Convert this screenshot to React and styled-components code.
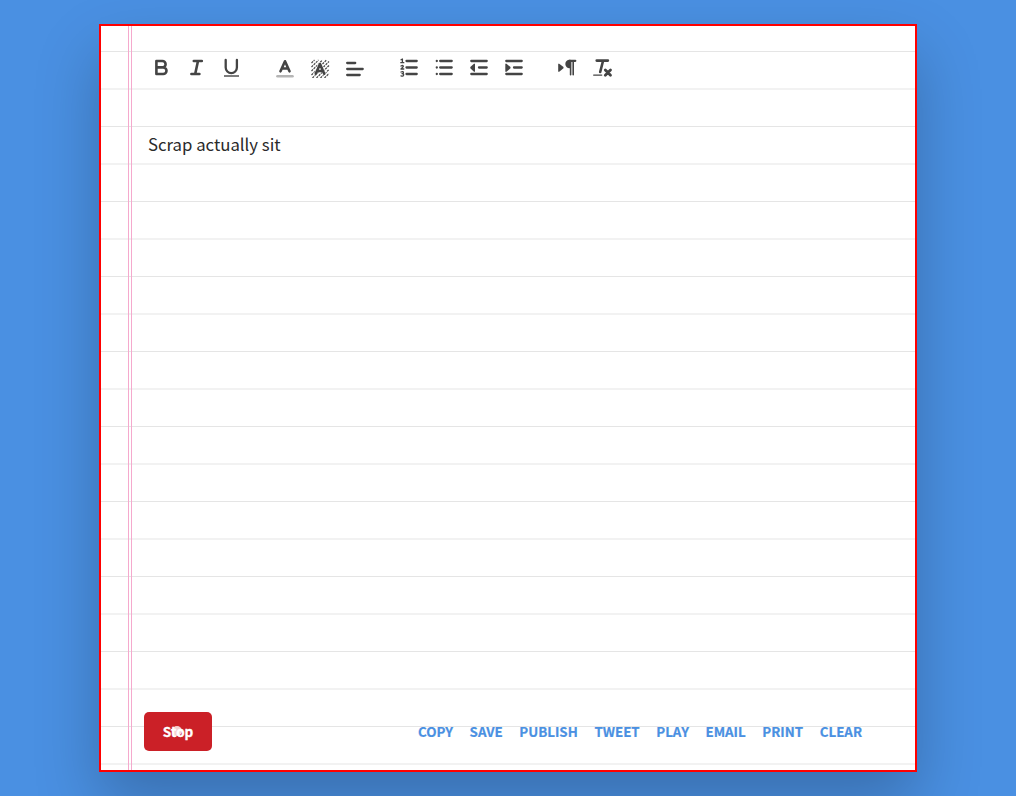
import React from "react";
import styled, { createGlobalStyle } from "styled-components";

const GlobalStyle = createGlobalStyle`
  *, *::before, *::after { box-sizing: border-box; }
  html, body { margin: 0; height: 100%; overflow: hidden; }
  body {
    background: #4a90e2;
    color: #2a2a2a;
    font-family: "Source Sans Pro", "Noto Sans CJK JP", sans-serif;
  }
`;

const Page = styled.main`
  height: 796px;
  padding: 24px 99px;
  background: #4a90e2;
`;

const Paper = styled.section`
  display: flex;
  width: 818px;
  height: 748px;
  border: 2px solid #ff0000;
  background-color: #fff;
  background-image: linear-gradient(
    to bottom,
    transparent 25px, #e5e5e5 25px, #e5e5e5 26px,
    transparent 26px, transparent 62px,
    #f2f2f2 62px, #f2f2f2 64px, transparent 64px
  );
  background-size: 100% 75px;
  background-origin: padding-box;
  box-shadow: 0 30px 60px rgba(0, 0, 0, 0.23);
`;

const Margin = styled.div`
  flex: none;
  width: 31px;
  border-right: 4px double #f5a9cd;
`;

const Content = styled.div`
  flex: 1;
  display: flex;
  flex-direction: column;
  padding: 24px 53px 19px 12px;
`;

const Toolbar = styled.div`
  display: flex;
  gap: 19px;
  height: 36px;
  margin-left: -0.5px;
`;

const Group = styled.div`
  display: flex;
`;

const ToolButton = styled.button`
  display: grid;
  place-items: center;
  width: 35px;
  height: 36px;
  padding: 0;
  border: 0;
  background: none;
  color: #444;
`;

const Icon = styled.svg`
  display: block;
  width: 20px;
  height: 20px;
  fill: none;
  stroke: currentColor;
  stroke-width: ${(p) => (p.$heavy ? 2.6 : 2.3)};
  stroke-linecap: round;
  stroke-linejoin: round;
`;

const Editor = styled.div`
  flex: 1;
  padding: 40px 4px;
  font-size: 16.75px;
  line-height: 37px;
`;

const Footer = styled.footer`
  display: flex;
  align-items: center;
  justify-content: space-between;
  height: 39px;
`;

const StopButton = styled.button`
  display: grid;
  place-items: center;
  width: 68px;
  height: 39px;
  padding: 0 0 2px;
  border: 0;
  border-radius: 5px;
  background: #cb2027;
  color: #fff;
  font: 700 13.5px "Noto Sans CJK JP", sans-serif;
  -webkit-text-stroke: 0.3px currentColor;
  > * { grid-area: 1 / 1; }
`;

const Pulse = styled.span`
  width: 10px;
  height: 10px;
  margin: 1px 2px 0 0;
  border-radius: 50%;
  background: rgba(255, 255, 255, 0.8);
`;

const Links = styled.nav`
  display: flex;
  gap: 16.6px;
`;

const Link = styled.a`
  color: #4a90e2;
  font-size: 13.35px;
  font-weight: 700;
  line-height: 20px;
  -webkit-text-stroke: 0.2px currentColor;
`;

const solid = { fill: "currentColor", stroke: "none" };

const groups = [
  [
    ["Bold", <path d="M5.4 3v13h6.8a3.3 3.3 0 0 0 0-6.6H5.4h6a3.2 3.2 0 0 0 0-6.4z" />, true],
    ["Italic", <path d="M7.8 3h8M5.4 16h8M12 3L9.2 16" />, true],
    ["Underline", <><path d="M4.7 2v7.500a5.600 5.600 0 0 0 11.200 0V2" /><path d="M3 18h15" strokeWidth="1.4" strokeLinecap="butt" /></>],
  ],
  [
    ["Text color", <><path d="M5.500 13.300L10 3.300l4.500 10M7 10.500h6" /><path d="M2.500 18.200h15" stroke="#b5b5b5" strokeWidth="2.600" /></>, true],
    ["Highlight", <><path strokeWidth="1.2" strokeDasharray="2.200 0.900" strokeLinecap="butt" d="M1.500 5L4.500 2M1.500 9L8.500 2M1.500 13L12.500 2M1.500 17L16.500 2M2.500 20L19 3.500M6.500 20L19 7.500M10.500 20l8.500-8.500M14.500 20l4.500-4.500" /><path stroke="#fff" strokeOpacity="0.6" strokeWidth="4" d="M5.800 15.700L10 6l4.200 9.700" /><path d="M5.800 15.700L10 6l4.200 9.700M7 13h6" /></>, true],
    ["Align", <path d="M2.200 5h8M2.200 11h15.500M2.200 17h12.500" />],
  ],
  [
    ["Ordered list", <><path d="M7.500 3h10.200M7.500 9.500h10.200M7.500 16h10.200" /><path strokeWidth="1.300" d="M2 1.800l1.400-.8v3.600M1.800 4.700h3M2 8q2.500-1.200 2.300.6L2 11h2.800M2 14q2.500-.8 2.400.6T3 15.700q2 0 1.600 1.500T2 17.800" /></>],
    ["Bullet list", <><path d="M6.200 3h11.500M6.200 9.500h11.500M6.200 16h11.500" /><path d="M2.800 3h.01M2.800 9.500h.01M2.800 16h.01" /></>],
    ["Outdent", <><path d="M2.300 3h15.400M10 9.500h7.700M2.300 16h15.400" /><path {...solid} d="M6 5.700v8H5L1.300 10.300v-1.200L5 5.700z" /></>],
    ["Indent", <><path d="M2.300 3h15.400M10 9.500h7.700M2.300 16h15.400" /><path {...solid} d="M1.300 5.700v8h1.200L6.500 10.300V9.100L2.500 5.700z" /></>],
  ],
  [
    ["Paragraph direction", <><path {...solid} d="M.2 5.700v8h1L5.500 10.300V9.100L1.200 5.700z" /><path {...solid} d="M11.500 1.800a4 4 0 0 0 0 8.400h1V1.800z" /><path d="M11.500 2.800h5.800" strokeWidth="2.200" /><path d="M12.600 3v13.700M15.200 3v13.700" strokeWidth="1.600" /></>],
    ["Clear formatting", <><path d="M3.700 2.600h11.200M10 3L7.200 14" /><path d="M.7 17.100h8" strokeWidth="1.400" /><path d="M12.300 12l5.200 5.200M17.500 12l-5.200 5.200" strokeWidth="2.800" /></>, true],
  ],
];

const actions = ["COPY", "SAVE", "PUBLISH", "TWEET", "PLAY", "EMAIL", "PRINT", "CLEAR"];

export default function App() {
  return (
    <Page>
      <GlobalStyle />
      <Paper>
        <Margin />
        <Content>
          <Toolbar>
            {groups.map((tools, i) => (
              <Group key={i}>
                {tools.map(([name, drawing, heavy]) => (
                  <ToolButton key={name} aria-label={name}>
                    <Icon viewBox="0 0 20 20" $heavy={heavy}>{drawing}</Icon>
                  </ToolButton>
                ))}
              </Group>
            ))}
          </Toolbar>
          <Editor>Scrap actually sit</Editor>
          <Footer>
            <StopButton><span>Stop</span><Pulse /></StopButton>
            <Links>{actions.map((label) => <Link key={label}>{label}</Link>)}</Links>
          </Footer>
        </Content>
      </Paper>
    </Page>
  );
}
